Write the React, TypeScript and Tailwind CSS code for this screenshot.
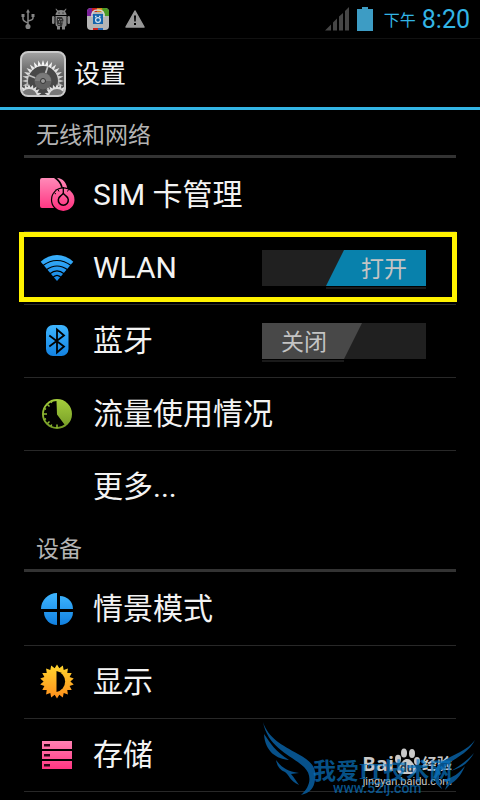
import React, { useState } from 'react';

const teeth = Array.from({ length: 36 }, (_, i) => {
  const angle = (i * Math.PI) / 18 - Math.PI / 2;
  const r = i % 2 === 0 ? 17 : 13.4;
  return `${18 + r * Math.cos(angle)},${17.5 + r * Math.sin(angle)}`;
}).join(' ');

// Spiky gear outline used by the app icon
const gear = (cx: number, cy: number, outer: number, inner: number, count: number) =>
  Array.from({ length: count * 2 }, (_, i) => {
    const angle = (i * Math.PI) / count;
    const r = i % 2 === 0 ? outer : inner;
    return `${cx + r * Math.cos(angle)},${cy + r * Math.sin(angle)}`;
  }).join(' ');

function Gradients() {
  return (
    <svg className="absolute h-0 w-0" aria-hidden="true">
      <defs>
        <linearGradient id="pink" gradientUnits="userSpaceOnUse" x1="0" y1="1" x2="0" y2="34">
          <stop offset="0" stopColor="#ff8ab8" />
          <stop offset="1" stopColor="#ff2f7e" />
        </linearGradient>
        <linearGradient id="blue" gradientUnits="userSpaceOnUse" x1="0" y1="2" x2="0" y2="34">
          <stop offset="0" stopColor="#3fb6ff" />
          <stop offset="1" stopColor="#1180e0" />
        </linearGradient>
        <linearGradient id="green" gradientUnits="userSpaceOnUse" x1="0" y1="3" x2="0" y2="33">
          <stop offset="0" stopColor="#a6cf3c" />
          <stop offset="1" stopColor="#749a26" />
        </linearGradient>
        <linearGradient id="orange" gradientUnits="userSpaceOnUse" x1="0" y1="1" x2="0" y2="34">
          <stop offset="0" stopColor="#ffd52e" />
          <stop offset="1" stopColor="#ff8f1c" />
        </linearGradient>
      </defs>
    </svg>
  );
}

function SimIcon() {
  return (
    <svg viewBox="0 0 36 36" className="size-9">
      <path d="M3 1H15C18 3 21 6 22 10L24 14V31H3Q1 31 1 29V3Q1 1 3 1Z" fill="url(#pink)" />
      <path d="M18 1C24 1 28 6 28.500 13H24C24 8 21.500 4 18 1Z" fill="url(#pink)" />
      <circle cx="24.300" cy="22.700" r="12.400" fill="#000" />
      <circle cx="24.300" cy="22.700" r="11.200" fill="url(#pink)" />
      <path d="M24.300 16.500L27 19A5 5 0 1 1 21.600 19Z" fill="none" stroke="#000" strokeWidth="1.500" />
      <path d="M24.300 10V16.500" stroke="#000" strokeWidth="1.300" />
      <path d="M19 12.500L20 14.500M29.500 12.500L28.500 14.500M15.500 16L17 17" stroke="#000" strokeWidth="1" />
    </svg>
  );
}

function WifiIcon() {
  return (
    <svg viewBox="0 0 36 36" className="size-9">
      <path d="M18 31L1.700 11.700Q9 5 18 5T34.300 11.700Z" fill="url(#blue)" />
      <g fill="none" stroke="#000" strokeWidth="1.200">
        <path d="M4 15.500Q10.500 10.500 18 10.500T32 15.500" />
        <path d="M7 20Q12.500 16 18 16T29 20" />
        <path d="M10.500 24Q14.500 20.800 18 20.800T25.500 24" />
        <path d="M13 28Q16 25.300 18 25.300T23 28" />
      </g>
    </svg>
  );
}

function BluetoothIcon() {
  return (
    <svg viewBox="0 0 36 36" className="size-9">
      <rect x="7" y="2" width="22.500" height="31" rx="7" fill="url(#blue)" />
      <path d="M10.300 12.500L25 23.500L18 29.500V6.500L25 12.500L10.300 23.500" fill="none" stroke="#000" strokeWidth="1.800" />
    </svg>
  );
}

function UsageIcon() {
  return (
    <svg viewBox="0 0 36 36" className="size-9">
      <circle cx="18" cy="18" r="15" fill="url(#green)" />
      <path d="M17.500 5A13 13 0 1 0 25.500 28.500L18 18.500Z" fill="#000" />
      <path d="M4 18H8M18 32V28.500M8 8L10.500 10.500M8.500 27.500L10.500 25.500M5.500 12.500L7 13.300M5.500 23.500L7 22.700M12 30L12.700 28.500M12 5.500L12.700 7" stroke="#8db832" strokeWidth="1.500" />
    </svg>
  );
}

function ProfileIcon() {
  return (
    <svg viewBox="0 0 36 36" className="size-9" fill="url(#blue)">
      <path d="M18 18H2A16 16 0 0 1 18 2Z" />
      <path d="M21 18V5A13 13 0 0 1 34 18Z" />
      <path d="M18 21V34A13 13 0 0 1 5 21Z" />
      <path d="M21 21H34A13 13 0 0 1 21 34Z" />
    </svg>
  );
}

function DisplayIcon() {
  return (
    <svg viewBox="0 0 36 36" className="size-9">
      <polygon points={teeth} fill="url(#orange)" />
      <path d="M17.500 7A10.700 10.700 0 0 1 17.500 28Z" fill="#000" />
    </svg>
  );
}

function StorageIcon() {
  return (
    <svg viewBox="0 0 36 36" className="size-9">
      <path d="M3 4H33V12H3ZM3 14H33V22H3ZM3 24H33V32H3Z" fill="url(#pink)" />
      <path d="M5 7H11V9.500H5ZM5 17H11V19.500H5ZM5 27H11V29.500H5Z" fill="#2a0615" />
    </svg>
  );
}

function SettingsIcon() {
  return (
    <svg viewBox="0 0 46 46" className="size-[46px]" aria-hidden="true">
      <defs>
        <linearGradient id="plate" x1="0" y1="0" x2="0" y2="1">
          <stop offset="0" stopColor="#a4a4a4" />
          <stop offset="0.5" stopColor="#626262" />
          <stop offset="1" stopColor="#444" />
        </linearGradient>
        <linearGradient id="steel" x1="0" y1="0" x2="0" y2="1">
          <stop offset="0" stopColor="#fff" />
          <stop offset="1" stopColor="#888" />
        </linearGradient>
        <clipPath id="inside">
          <rect x="2" y="2" width="42" height="42" rx="6" />
        </clipPath>
      </defs>
      <rect x="1" y="1" width="44" height="44" rx="7" fill="url(#plate)" stroke="#cacaca" strokeWidth="2" />
      <g clipPath="url(#inside)">
        <polygon points={gear(23, 30, 21, 15.5, 28)} fill="url(#steel)" />
        <circle cx="23" cy="30" r="15" fill="#484848" />
        <path d="M23 30L28 15M23 30L8 24M23 30L31 42" stroke="#bdbdbd" strokeWidth="1.800" />
        <circle cx="23" cy="30" r="8.500" fill="#626262" />
        <path d="M15 30A8 8 0 0 1 31 30Z" fill="#7a7a7a" />
        <circle cx="23" cy="30" r="2.500" fill="#999" stroke="#333" strokeWidth="1" />
        <polygon points={gear(9, 46, 13, 9.5, 20)} fill="#dedede" />
        <circle cx="9" cy="46" r="8" fill="#777" />
        <polygon points={gear(37, 46, 13, 9.5, 20)} fill="#dedede" />
        <circle cx="37" cy="46" r="8" fill="#777" />
      </g>
    </svg>
  );
}

function StatusBar() {
  return (
    <div className="flex h-[39px] items-center justify-between border-b border-[#111] pr-2.5 pl-[21px]">
      <div className="flex items-center gap-4">
        <svg viewBox="0 0 14 22" className="h-[22px] w-3.5" fill="none" stroke="#858585" strokeWidth="1.500">
          <path d="M7 3V18M2 8V11Q2 13 7 15M12 8V10Q12 12 7 13" />
          <circle cx="7" cy="18.500" r="1.800" fill="#858585" />
          <path d="M7 1L9 4.500H5Z" fill="#858585" stroke="none" />
          <path d="M0.500 6H3.500V9H0.500ZM10.500 6H13.500V9H10.500Z" fill="#858585" stroke="none" />
        </svg>
        <svg viewBox="0 0 20 22" className="h-[22px] w-5" fill="#858585">
          <path d="M5 0.500L7 2.500Q10 1.500 13 2.500L15 0.500L15.500 1L14 3.500Q15.500 5 15.500 7H4.500Q4.500 5 6 3.500L4.500 1Z" />
          <path d="M4.500 8H15.500V17Q15.500 18.500 14 18.500V21.500H11V18.500H9V21.500H6V18.500Q4.500 18 4.500 16Z" />
          <rect x="1" y="8" width="2.500" height="8" rx="1.200" />
          <rect x="16.500" y="8" width="2.500" height="8" rx="1.200" />
          <path d="M6 9H11L12.500 12L11 18H7Q5 15 6 9Z" fill="#333" />
          <path d="M7 11H8V12H7ZM9.500 11H10.500V12H9.500ZM8 13.500H9V14.500H8ZM10.500 13.500H11.500V14.500H10.500ZM7.500 16H8.500V17H7.500Z" fill="#aaa" />
          <path d="M7.500 4.500H8.500V5.500H7.500ZM11.500 4.500H12.500V5.500H11.500Z" fill="#000" />
        </svg>
        <svg viewBox="0 0 22 22" className="size-[22px]">
          <defs>
            <clipPath id="bag">
              <rect width="22" height="22" rx="4" />
            </clipPath>
          </defs>
          <g clipPath="url(#bag)">
            <rect width="22" height="22" fill="#b5b5b5" />
            <path d="M0 0H6V8H0Z" fill="#7a1f9a" />
            <path d="M5 0H11V4H5Z" fill="#c8201f" />
            <path d="M10 0H16V4H10Z" fill="#d98a12" />
            <path d="M15 0H22V8H17Z" fill="#4b9b25" />
            <path d="M6 20H11V22H6Z" fill="#c8201f" />
            <path d="M11 20H16V22H11Z" fill="#1f66b5" />
            <path d="M5 9Q4 2 11 2T17 9" fill="none" stroke="#d5d5d5" strokeWidth="1.500" />
            <path d="M6 6H16V16H6Z" fill="#1465ad" />
            <circle cx="11" cy="12" r="2.400" fill="none" stroke="#d8e5f0" strokeWidth="1.200" />
            <path d="M8 8.500H9.500M12 8.500H13.500" stroke="#d8e5f0" strokeWidth="1.500" />
          </g>
        </svg>
        <svg viewBox="0 0 20 18" className="h-[18px] w-5">
          <path d="M10 1L19 17H1Z" fill="#989898" stroke="#989898" strokeWidth="1.500" strokeLinejoin="round" />
          <path d="M9 5.500H11L10.700 11.500H9.300ZM9 13H11V15H9Z" fill="#000" />
        </svg>
      </div>
      <div className="flex items-center text-[#33b5e5]">
        <svg viewBox="0 0 24 24" className="mr-2 size-6" fill="#464646">
          <path d="M0 23.500L6 17.500V23.500ZM8 15.500L12 11.500V23.500H8ZM14 9.500L18 6V23.500H14ZM20 4L24 0V23.500H20Z" />
        </svg>
        <svg viewBox="0 0 16 24" className="mr-[11px] h-6 w-4" fill="#3d9cc4">
          <path d="M5 0H11V2H16V24H0V2H5Z" />
        </svg>
        <span className="mr-1.5 pt-1 text-[16px] leading-6">下午</span>
        <span className="pt-0.5 text-[25px] leading-6">8:20</span>
      </div>
    </div>
  );
}

function Toggle({ label, initial }: { label: string; initial: boolean }) {
  const [on, setOn] = useState(initial);

  return (
    <button
      type="button"
      role="switch"
      aria-checked={on}
      aria-label={label}
      onClick={() => setOn(!on)}
      className={`relative mr-[30px] flex h-9 w-[164px] bg-[#202020] text-[23px] leading-10 text-[#c4c4c4] ${on ? 'justify-end' : 'justify-start'}`}
    >
      {on ? (
        <span className="h-9 w-[100px] bg-[#0881ac] pl-4 text-center [clip-path:polygon(18px_0,100%_0,100%_100%,0_100%)]">打开</span>
      ) : (
        <span className="h-9 w-[100px] bg-[#484848] pr-4 text-center [clip-path:polygon(0_0,100%_0,82px_100%,0_100%)]">关闭</span>
      )}
      <span className={`absolute top-[37px] h-0.5 bg-[#1a1a1a] ${on ? 'right-0 w-[100px]' : 'left-0 w-[82px]'}`} />
    </button>
  );
}

type Item = {
  title: string;
  icon?: React.ReactNode;
  toggle?: boolean;
  highlighted?: boolean;
};

const sections: { title: string; items: Item[] }[] = [
  {
    title: '无线和网络',
    items: [
      { title: 'SIM 卡管理', icon: <SimIcon /> },
      { title: 'WLAN', icon: <WifiIcon />, toggle: true, highlighted: true },
      { title: '蓝牙', icon: <BluetoothIcon />, toggle: false },
      { title: '流量使用情况', icon: <UsageIcon /> },
      { title: '更多...' },
    ],
  },
  {
    title: '设备',
    items: [
      { title: '情景模式', icon: <ProfileIcon /> },
      { title: '显示', icon: <DisplayIcon /> },
      { title: '存储', icon: <StorageIcon /> },
    ],
  },
];

function Row({ item, last }: { item: Item; last: boolean }) {
  return (
    <li className={`relative flex items-center border-b ${last ? 'border-transparent' : 'border-[#282828]'}`}>
      <a href="#" className="flex h-[72px] flex-1 items-center gap-[18px] pl-[15px]">
        <span className="size-9 shrink-0" aria-hidden="true">{item.icon}</span>
        <span className="text-[30px] leading-10 whitespace-nowrap">{item.title}</span>
      </a>
      {item.toggle !== undefined && <Toggle label={item.title} initial={item.toggle} />}
      {item.highlighted && (
        <span className="pointer-events-none absolute top-0 -right-px bottom-0.5 -left-[5px] border-5 border-[#fff200]" />
      )}
    </li>
  );
}

function Watermark() {
  return (
    <div className="pointer-events-none absolute right-0 bottom-0 h-20 w-[220px]">
      {/* Baidu Jingyan mark */}
      <div className="absolute right-7 bottom-3 flex flex-col items-end text-[#c9c9c9]">
        <div className="flex h-7 items-end">
          <span className="font-['Open_Sans'] text-[20px] leading-6 font-bold">Bai</span>
          <svg viewBox="0 0 26 28" className="mr-0.5 h-7 w-[26px]" fill="#c9c9c9">
            <ellipse cx="4" cy="11" rx="3" ry="4.200" />
            <ellipse cx="10" cy="5" rx="3" ry="4.500" />
            <ellipse cx="18" cy="5.500" rx="3" ry="4.500" />
            <ellipse cx="23" cy="13" rx="3" ry="4" />
            <path d="M13 11C17 11 18 14 21 18C24 22 22 26 18 26H8C3 26 2 22 5 18C8 15 9 11 13 11Z" />
            <text x="6" y="24" fontSize="12" fontWeight="700" fill="#183c55">du</text>
          </svg>
          <span className="text-[15px] leading-6 font-bold">经验</span>
        </div>
        <span className="text-[11px] leading-3">jingyan.baidu.com</span>
      </div>
      {/* Winged site mark */}
      <svg viewBox="0 0 220 80" className="absolute inset-0 h-20 w-[220px]" fill="#07518a">
        <path d="M3 2C8 18 22 25 38 34C53 42 57 49 55 60C54 68 50 73 41 75C50 67 53 56 44 47C31 35 8 28 3 2Z" />
        <path d="M4 14C11 24 15 31 29 40C17 39 5 32 4 14Z" />
        <path d="M16 40C22 48 27 51 39 53L31 54C34 57 36 61 39 65C29 60 30 56 25 52C20 50 17 46 16 40Z" />
        <path d="M215 20C210 31 199 36 188 44C178 51 177 58 182 69C171 61 172 49 182 42C193 34 207 31 215 20Z" />
        <path d="M214 33C208 43 203 47 191 51C202 44 207 41 214 33Z" />
        <path d="M205 46C202 53 198 59 192 63C188 66 187 68 185 70C186 66 188 63 189 61L184 60C194 57 198 54 205 46Z" />
      </svg>
      <div className="absolute bottom-1.5 left-[53px] text-[#0a76c4]/70">
        <div className="font-['Liberation_Serif','Noto_Sans_CJK_SC',serif] text-[23px] leading-5 font-bold whitespace-nowrap">
          我爱IT技术网
        </div>
        <div className="pl-5 text-[14px] leading-3 font-medium">www.52ij.com</div>
      </div>
    </div>
  );
}

export default function App() {
  return (
    <div className="relative min-h-screen overflow-hidden bg-black font-[Roboto,'Noto_Sans_CJK_SC',sans-serif] text-[#f3f3f3]">
      <Gradients />
      <StatusBar />
      <header className="flex h-[71px] items-center gap-2 border-b-3 border-[#33b5e5] pt-0.5 pl-5">
        <SettingsIcon />
        <h1 className="text-[26px] leading-8">设置</h1>
      </header>
      <main className="px-6">
        {sections.map((section) => (
          <section key={section.title}>
            <h2 className="flex h-12 items-center border-b-3 border-[#333] pt-1.5 pl-3 text-[23px] leading-8 text-[#b3b3b3]">
              {section.title}
            </h2>
            <ul className="pt-px">
              {section.items.map((item, index) => (
                <Row key={item.title} item={item} last={section.title === '无线和网络' && index === section.items.length - 1} />
              ))}
            </ul>
          </section>
        ))}
      </main>
      <Watermark />
    </div>
  );
}
